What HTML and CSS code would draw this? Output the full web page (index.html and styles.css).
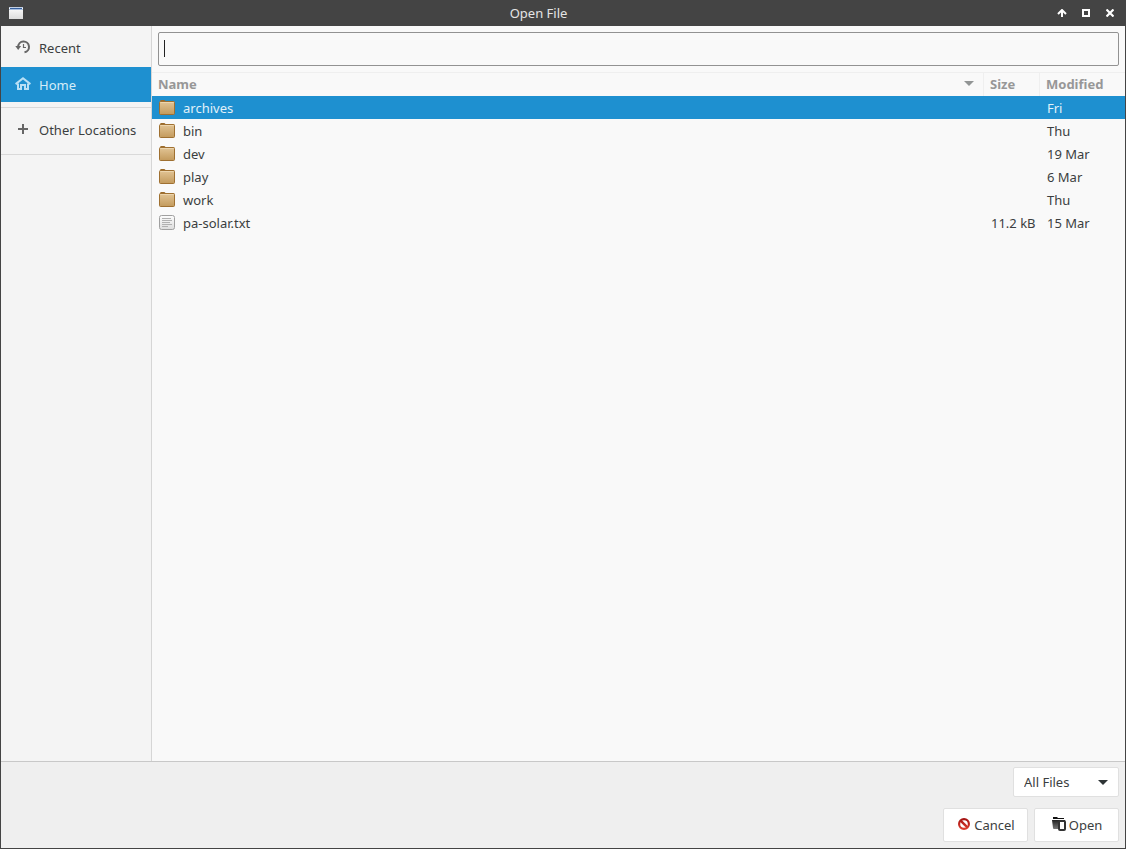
FILE: index.html
```html
<!DOCTYPE html>
<html lang="en">
<head>
  <meta charset="UTF-8" />
  <title>Open File</title>
  <link rel="stylesheet" href="styles.css">
</head>
<body>

  <!-- Shared icons -->
  <svg class="defs" width="0" height="0" aria-hidden="true">
    <defs>
      <linearGradient id="folder-fill" x1="0" y1="0" x2="0" y2="1">
        <stop offset="0" stop-color="#e2c596" />
        <stop offset="1" stop-color="#c39a5c" />
      </linearGradient>
      <linearGradient id="paper-fill" x1="0" y1="0" x2="0" y2="1">
        <stop offset="0" stop-color="#fdfdfd" />
        <stop offset="1" stop-color="#dcdcdc" />
      </linearGradient>
      <linearGradient id="dark-fill" x1="0" y1="0" x2="0" y2="1">
        <stop offset="0" stop-color="#222" />
        <stop offset="1" stop-color="#777" />
      </linearGradient>
      <linearGradient id="red-fill" gradientUnits="userSpaceOnUse" x1="0" y1="1" x2="0" y2="13">
        <stop offset="0" stop-color="#a01010" />
        <stop offset="1" stop-color="#e04030" />
      </linearGradient>
      <symbol id="folder" viewBox="0 0 16 16">
        <path d="M1.5 2V1q0-.5.5-.5h3.500q.5 0 .5.5v.5h8.500q.5 0 .5.5z" fill="#b5853f" stroke="#9a6a2a" />
        <rect x=".5" y="1.500" width="15" height="13" rx="1" fill="url(#folder-fill)" stroke="#9f7031" />
        <path d="M1.500 2.500h13" stroke="#ecd5ae" />
      </symbol>
      <symbol id="text-file" viewBox="0 0 16 16">
        <rect x=".5" y=".5" width="15" height="14" rx="2" fill="url(#paper-fill)" stroke="#a0a0a0" />
        <path d="M3 3.5h9M3 5.5h10M3 7.5h8M3 9.5h10M3 11.5h6" stroke="#b0b0b0" />
      </symbol>
    </defs>
  </svg>

  <div class="window">
    <header class="titlebar">
      <svg class="app-icon" width="14" height="12" viewBox="0 0 14 12">
        <rect width="14" height="12" fill="url(#paper-fill)" />
        <path d="M0 .5h14" stroke="#c2d0e4" />
        <path d="M1 1.5h12" stroke="#365f9c" />
        <path d="M0 2.5h14" stroke="#a9bfdf" />
      </svg>
      <h1>Open File</h1>
      <div class="window-controls">
        <button type="button" aria-label="Shade">
          <svg width="10" height="8" viewBox="0 0 10 8"><path d="M5 8V2M1 5l4-4 4 4" fill="none" stroke="#fff" stroke-width="2" /></svg>
        </button>
        <button type="button" aria-label="Maximize">
          <svg width="8" height="8" viewBox="0 0 8 8"><path d="M1 1h6v6H1z" fill="none" stroke="#fff" stroke-width="2" /></svg>
        </button>
        <button type="button" aria-label="Close">
          <svg width="8" height="8" viewBox="0 0 8 8"><path d="M.5.5l7 7M7.5.5l-7 7" stroke="#fff" stroke-width="2.2" /></svg>
        </button>
      </div>
    </header>

    <div class="content">
      <nav class="places">
        <ul>
          <li>
            <a href="#recent">
              <svg width="16" height="16" viewBox="0 0 16 16" fill="none" stroke="#666">
                <path d="M3.2 7a5.4 5.4 0 1 1 6.3 5.3" stroke-width="2" />
                <path d="M.3 6h5.8L3.2 10z" fill="#666" stroke="none" />
                <path d="M8.5 4v3.5H11" stroke-width="1.2" />
              </svg>
              Recent
            </a>
          </li>
          <li>
            <a href="#home" class="active">
              <svg width="16" height="16" viewBox="0 0 16 16" fill="none" stroke="#b9e0f5">
                <path d="M.6 7.1 8 1.3l7.4 5.8" stroke-width="2" />
                <path d="M3 6.5V12h3V8h4v4h3V6.5" stroke-width="2" />
              </svg>
              Home
            </a>
          </li>
        </ul>
        <ul>
          <li>
            <a href="#other">
              <svg width="16" height="16" viewBox="0 0 16 16"><path d="M3 7h10M8 2v10" stroke="#666" stroke-width="2" /></svg>
              Other Locations
            </a>
          </li>
        </ul>
      </nav>

      <main class="browser">
        <div class="location">
          <input type="text" aria-label="Location">
          <span class="caret"></span>
        </div>
        <table class="files">
          <thead>
            <tr>
              <th class="name">
                <div class="sort">Name
                  <svg width="10" height="5" viewBox="0 0 10 5"><path d="M0 0h10L5 5z" fill="#929595" /></svg>
                </div>
              </th>
              <th class="size">Size</th>
              <th class="modified">Modified</th>
            </tr>
          </thead>
          <tbody>
            <tr class="selected">
              <td><div class="file"><svg width="16" height="16"><use href="#folder" /></svg>archives</div></td>
              <td></td>
              <td>Fri</td>
            </tr>
            <tr>
              <td><div class="file"><svg width="16" height="16"><use href="#folder" /></svg>bin</div></td>
              <td></td>
              <td>Thu</td>
            </tr>
            <tr>
              <td><div class="file"><svg width="16" height="16"><use href="#folder" /></svg>dev</div></td>
              <td></td>
              <td>19 Mar</td>
            </tr>
            <tr>
              <td><div class="file"><svg width="16" height="16"><use href="#folder" /></svg>play</div></td>
              <td></td>
              <td>6 Mar</td>
            </tr>
            <tr>
              <td><div class="file"><svg width="16" height="16"><use href="#folder" /></svg>work</div></td>
              <td></td>
              <td>Thu</td>
            </tr>
            <tr>
              <td><div class="file"><svg width="16" height="16"><use href="#text-file" /></svg>pa-solar.txt</div></td>
              <td>11.2 kB</td>
              <td>15 Mar</td>
            </tr>
          </tbody>
        </table>
      </main>
    </div>

    <footer class="actions">
      <div class="filter">
        <select aria-label="File type">
          <option>All Files</option>
        </select>
        <svg width="10" height="5" viewBox="0 0 10 5"><path d="M0 0h10L5 5z" fill="#2e3436" /></svg>
      </div>
      <div class="buttons">
        <button type="button">
          <svg width="16" height="16" viewBox="0 0 16 16" fill="none" stroke="url(#red-fill)">
            <circle cx="8" cy="7" r="4.9" stroke-width="2.2" />
            <path d="M4.6 3.6l6.8 6.8" stroke-width="2.4" />
          </svg>
          Cancel
        </button>
        <button type="button">
          <svg width="16" height="16" viewBox="0 0 16 16">
            <path d="M2 0h4l1 1h6v1H2z" fill="#111" />
            <path d="M1 3h13v1l-1 8H3q-1 0-1-1z" fill="url(#dark-fill)" />
            <rect x="7" y="3" width="8" height="11" rx="2" fill="#333" />
            <rect x="9" y="5" width="4" height="7" fill="#fff" />
          </svg>
          Open
        </button>
      </div>
    </footer>
  </div>

</body>
</html>
```
FILE: styles.css
```css
* {
  box-sizing: border-box;
}
body {
  margin: 0;
  font-family: "Noto Sans", sans-serif;
  font-size: 13px;
  line-height: 18px;
  color: #3b3e40;
}
button, input, select {
  font: inherit;
  color: inherit;
}
svg {
  display: block;
  flex: none;
}
.defs {
  position: absolute;
}
.window {
  display: flex;
  flex-direction: column;
  min-height: 100vh;
  border: 1px solid #444;
  border-top: 0;
  background: #f9f9f9;
}

/* Title bar */
.titlebar {
  display: grid;
  grid-template-columns: 1fr auto 1fr;
  align-items: center;
  height: 26px;
  padding: 0 3px 0 8px;
  background: #444;
  color: #e4e4e4;
}
.titlebar h1 {
  margin: 0;
  padding-right: 54px;
  font-size: 13px;
  font-weight: 400;
}
.window-controls {
  display: flex;
  justify-content: flex-end;
}
.window-controls button {
  display: flex;
  align-items: center;
  justify-content: center;
  width: 24px;
  height: 24px;
  padding: 0;
  border: 0;
  background: none;
}

.content {
  display: flex;
  flex: 1;
}

/* Places sidebar */
.places {
  width: 151px;
  background: #f4f4f4;
  border-right: 1px solid #d6d6d6;
}
.places ul {
  display: flex;
  flex-direction: column;
  gap: 2px;
  margin: 0;
  padding: 4px 0 5px;
  list-style: none;
  border-bottom: 1px solid #d9d9d9;
}
.places ul + ul {
  padding: 4px 0 7px;
}
.places a {
  display: flex;
  align-items: center;
  gap: 8px;
  height: 35px;
  padding: 0 14px;
  color: inherit;
  text-decoration: none;
  white-space: nowrap;
}
.places a.active {
  background: #1e90d0;
  color: #d5edf8;
}

/* File list */
.browser {
  flex: 1;
  min-width: 0;
}
.location {
  position: relative;
  padding: 6px;
}
.location input {
  display: block;
  width: 100%;
  height: 34px;
  padding: 0 6px;
  border: 1px solid #929292;
  border-radius: 2px;
  background: #f9f9f9;
  outline: none;
}
.caret {
  position: absolute;
  left: 12px;
  top: 14px;
  width: 1px;
  height: 17px;
  background: #222;
}
.files {
  width: 100%;
  table-layout: fixed;
  border-collapse: separate;
  border-spacing: 0;
}
.files th {
  height: 24px;
  padding: 0 6px 2px;
  border-top: 1px solid #efefef;
  border-right: 1px solid #efefef;
  color: #979797;
  text-align: left;
}
.files th.size {
  width: 56px;
}
.files th.modified {
  width: 85px;
  border-right: 0;
}
.sort {
  display: flex;
  align-items: center;
  justify-content: space-between;
  padding-right: 3px;
}
.files td {
  height: 23px;
  padding: 0 7px;
  white-space: nowrap;
}
.file {
  display: flex;
  align-items: center;
  gap: 8px;
}
.selected {
  background: #1e90d0;
  color: #e1f1f9;
}

/* Bottom bar */
.actions {
  display: flex;
  flex-direction: column;
  align-items: flex-end;
  gap: 11px;
  padding: 5px 6px 6px;
  border-top: 1px solid #c8c8c8;
  background: #efefef;
}
.filter {
  position: relative;
}
.filter select {
  display: block;
  width: 106px;
  height: 30px;
  padding: 0 10px;
  border: 1px solid #e0e0e0;
  border-radius: 2px;
  background: #fff;
  appearance: none;
}
.filter svg {
  position: absolute;
  right: 11px;
  top: 13px;
  pointer-events: none;
}
.buttons {
  display: flex;
  gap: 6px;
}
.buttons button {
  display: flex;
  align-items: center;
  justify-content: center;
  gap: 2px;
  width: 85px;
  height: 34px;
  padding: 0;
  border: 1px solid #e0e0e0;
  border-radius: 2px;
  background: #fff;
}
```
